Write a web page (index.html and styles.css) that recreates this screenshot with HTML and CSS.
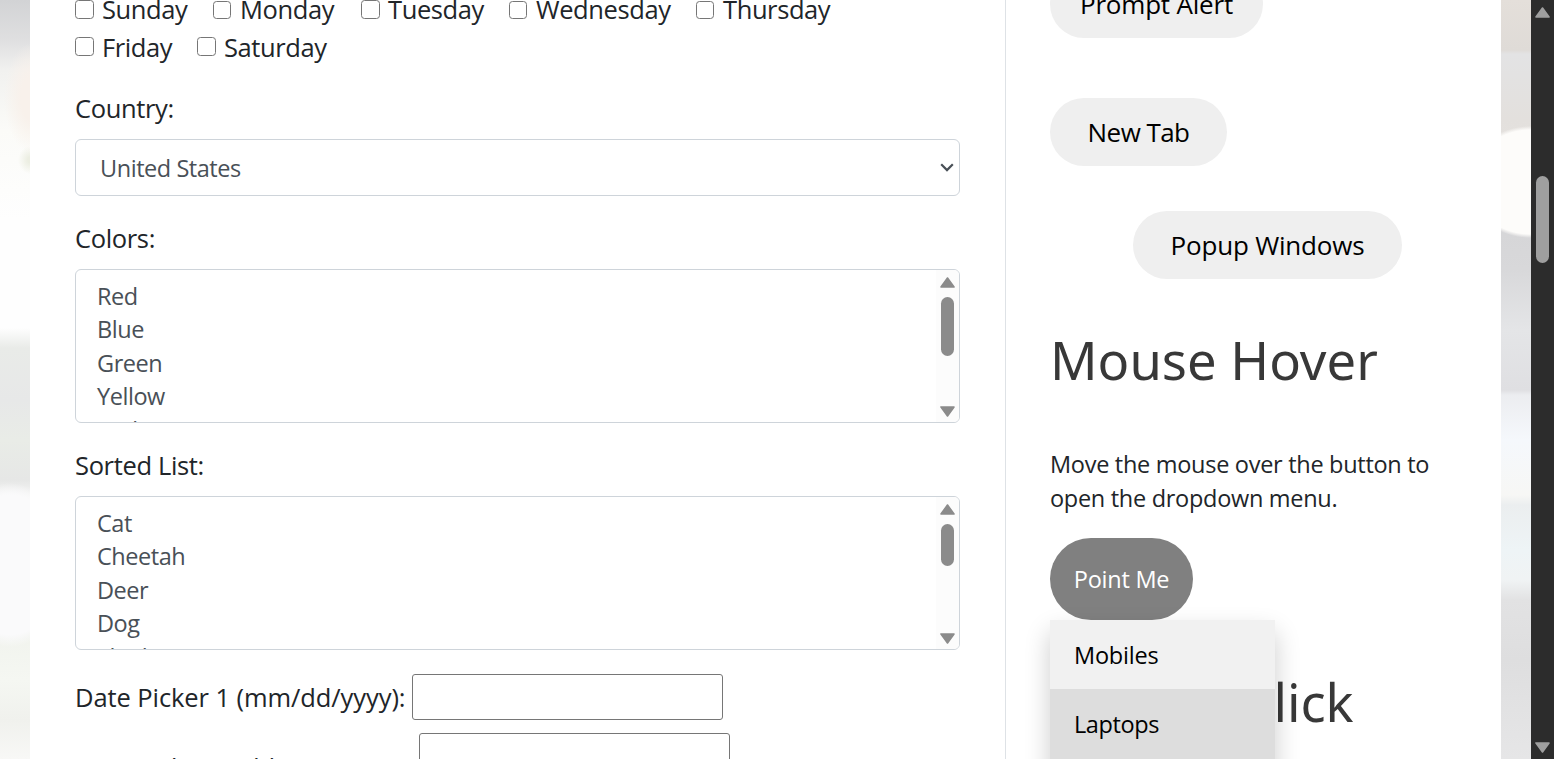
FILE: index.html
```html
<!DOCTYPE html>
<html lang="en">
<head>
<meta charset="utf-8">
<title>Automation Practice</title>
<link rel="stylesheet" href="styles.css">
</head>
<body>
<div class="page">
  <div class="strip strip-left"></div>
  <main class="content">
    <section class="form-col">
      <div class="days">
        <label class="day sun"><i class="box"></i><span>Sunday</span></label>
        <label class="day mon"><i class="box small"></i><span>Monday</span></label>
        <label class="day tue"><i class="box"></i><span>Tuesday</span></label>
        <label class="day wed"><i class="box small"></i><span>Wednesday</span></label>
        <label class="day thu"><i class="box small"></i><span>Thursday</span></label>
        <label class="day fri"><i class="box"></i><span>Friday</span></label>
        <label class="day sat"><i class="box"></i><span>Saturday</span></label>
      </div>
      <div class="label">Country:</div>
      <div class="select"><span>United States</span>
        <svg width="14" height="9" viewBox="0 0 14 9"><path d="M1.2 1.3 7 7.1 12.8 1.3" fill="none" stroke="#495057" stroke-width="2.2"/></svg>
      </div>
      <div class="label">Colors:</div>
      <div class="list">
        <ul><li>Red</li><li>Blue</li><li>Green</li><li>Yellow</li><li>Red</li></ul>
        <div class="track">
          <svg width="15" height="11" viewBox="0 0 15 11"><path class="arrow" d="M7.5 1 14 10H1Z"/></svg>
          <div class="thumb thumb-colors"></div>
          <svg class="down" width="15" height="11" viewBox="0 0 15 11"><path class="arrow" d="M7.5 10 1 1H14Z"/></svg>
        </div>
      </div>
      <div class="label">Sorted List:</div>
      <div class="list">
        <ul><li>Cat</li><li>Cheetah</li><li>Deer</li><li>Dog</li><li>Elephant</li></ul>
        <div class="track">
          <svg width="15" height="11" viewBox="0 0 15 11"><path class="arrow" d="M7.5 1 14 10H1Z"/></svg>
          <div class="thumb thumb-sorted"></div>
          <svg class="down" width="15" height="11" viewBox="0 0 15 11"><path class="arrow" d="M7.5 10 1 1H14Z"/></svg>
        </div>
      </div>
      <div class="date date-one"><span class="date-label">Date Picker 1 (mm/dd/yyyy):</span><input class="date-input"></div>
      <div class="date date-two"><span class="date-label">Date Picker 2 (dd/mm/yyyy) :</span><input class="date-input"></div>
    </section>
    <aside class="side-col">
      <button class="pill prompt">Prompt Alert</button>
      <button class="pill newtab">New Tab</button>
      <button class="pill popup">Popup Windows</button>
      <h2 class="title hover-title">Mouse Hover</h2>
      <p class="hint">Move the mouse over the button to<br>open the dropdown menu.</p>
      <div class="dropdown">
        <button class="point">Point Me</button>
        <div class="menu"><a>Mobiles</a><a class="active">Laptops</a></div>
      </div>
      <h2 class="title click-title">Double Click</h2>
    </aside>
  </main>
  <div class="strip strip-right"></div>
  <div class="scrollbar">
    <svg width="15" height="11" viewBox="0 0 15 11"><path class="arrow-light" d="M7.5 1 14 10H1Z"/></svg>
    <div class="page-thumb"></div>
    <svg class="page-down" width="15" height="11" viewBox="0 0 15 11"><path class="arrow-light" d="M7.5 10 1 1H14Z"/></svg>
  </div>
</div>
</body>
</html>
```
FILE: styles.css
```css
* { box-sizing: border-box; }
body { margin: 0; overflow: hidden; font-family: "Open Sans", "Noto Sans", sans-serif; color: #212529; }
.page { display: flex; width: 1554px; height: 759px; overflow: hidden; }
.strip { width: 30px; flex: none; }
.strip-left {
  background:
    radial-gradient(ellipse 28px 55px at 32px 98px, #f8f1eb 40%, transparent),
    radial-gradient(ellipse 12px 14px at 30px 160px, #eceee2 20%, transparent),
    radial-gradient(ellipse 60px 82px at 10px 565px, #fafafb 85%, transparent),
    linear-gradient(#d2d3d5 0, #dfdfe0 40px, #f1f1ef 70px, #fbfbf8 130px, #fefefe 220px, #fefefe 328px, #e9ebe8 348px, #e7e8e8 400px, #e9ece7 440px, #e6e7e6 480px, #f9f9f9 500px, #f9f9fb 580px, #eef0ea 595px, #f5f7f2 680px, #f0f1ed 720px, #f8f8f6 759px);
}
.strip-right {
  background:
    radial-gradient(ellipse 65px 56px at 30px 182px, #fdfcfa 93%, transparent),
    linear-gradient(#e4dfda 0, #dfdbd7 50px, #e3e3e4 54px, #e3e0dd 120px, #e5e2df 160px, #d6d6d8 235px, #d8d8da 270px, #e4e5e7 330px, #dfdfe2 390px, #ecedf0 395px, #f5f8fc 440px, #f7f7f5 495px, #ebeeef 505px, #eef4f6 550px, #f0f3f4 580px, #e2e2e3 600px, #dededf 660px, #e6e6e7 759px);
}
.content { display: flex; width: 1471px; height: 759px; flex: none; background: #fff; }
.form-col { width: 976px; height: 759px; padding: 0 45px; border-right: 1px solid #dee2e6; overflow: hidden; font-size: 25.5px; }
.side-col { width: 495px; height: 759px; padding-left: 44px; overflow: hidden; display: flex; flex-direction: column; align-items: flex-start; }

.days { display: flex; flex-wrap: wrap; margin-top: -9px; height: 76px; }
.day { display: flex; height: 38px; line-height: 37px; white-space: nowrap; letter-spacing: -.4px; }
.box { flex: none; width: 19px; height: 19px; margin: 9px 8px 0 0; border: 1px solid #767676; border-radius: 3.5px; background: #fff; }
.box.small { width: 18px; height: 18px; margin: 10px 9px 0 0; }
.fri .box, .sat .box { margin-top: 8px; }
.sun { width: 138px; }
.mon, .tue { width: 148px; }
.wed { width: 187px; }
.thu { width: 240px; }
.fri { width: 122px; }

.label { height: 38px; line-height: 36px; margin-top: 23px; margin-bottom: 11px; letter-spacing: -.35px; }
.select { display: flex; align-items: center; justify-content: space-between; height: 57px; padding: 0 5px 0 24px; margin-bottom: 24px; border: 1px solid #ced4da; border-radius: 6px; font-size: 23.5px; letter-spacing: -.45px; color: #495057; }
.list { display: flex; justify-content: space-between; height: 154px; margin-bottom: 24px; border: 1px solid #ced4da; border-radius: 6px; overflow: hidden; font-size: 23.5px; letter-spacing: -.45px; color: #495057; }
.list ul { margin: 0; padding: 9px 0 0 21px; list-style: none; }
.list li { height: 33.4px; line-height: 34px; }
.track { width: 23px; height: 152px; background: #fcfcfc; display: flex; flex-direction: column; align-items: center; padding-top: 7px; }
.track svg, .scrollbar svg { flex: none; }
.thumb { width: 13px; margin-top: 9px; border-radius: 7px; background: #8b8b8b; }
.thumb-colors { height: 59px; }
.thumb-sorted { height: 42px; }
.down { margin-top: auto; margin-bottom: 5px; }
.arrow { fill: #8b8b8b; stroke: #8b8b8b; stroke-width: 1.6; stroke-linejoin: round; }
.arrow-light { fill: #9f9f9f; stroke: #9f9f9f; stroke-width: 1.6; stroke-linejoin: round; }

.date { display: flex; white-space: nowrap; letter-spacing: -.08px; }
.date-label { width: 337px; line-height: 46px; }
.date-input { width: 311px; height: 46px; padding: 0; border: 1px solid #767676; border-radius: 3px; background: #fff; }
.date-one { height: 59px; }
.date-two .date-label { width: 344px; padding-top: 11px; }

.pill { flex: none; height: 68px; padding: 0; border: 0; border-radius: 34px; background: #efefef; color: #000; font: 26px "Open Sans", sans-serif; letter-spacing: -.2px; white-space: nowrap; }
.prompt { width: 213px; margin-top: -30px; }
.newtab { width: 177px; margin-top: 60px; letter-spacing: -.57px; }
.popup { width: 269px; margin: 45px 0 0 83px; }
.title { margin: 0; flex: none; color: #383838; font: 400 52.5px/72px "Noto Sans", sans-serif; white-space: nowrap; }
.hover-title { margin-top: 45px; }
.hint { margin: 51px 0 0; font-size: 23.5px; letter-spacing: -.29px; line-height: 34px; height: 68px; white-space: nowrap; }
.dropdown { position: relative; flex: none; margin-top: 23px; height: 82px; }
.point { width: 143px; height: 82px; padding: 0; border: 0; border-radius: 41px; background: #808080; color: #fff; font: 23.5px "Open Sans", sans-serif; letter-spacing: -.25px; }
.menu { position: absolute; top: 82px; left: 0; width: 225px; height: 207px; background: #f1f1f1; box-shadow: 0 12px 24px rgba(0,0,0,.2); z-index: 1; }
.menu a { display: block; height: 69px; padding: 0 24px; line-height: 70px; font-size: 23.5px; letter-spacing: -.2px; color: #000; }
.menu .active { height: 70px; background: #ddd; letter-spacing: -.4px; }
.click-title { margin-top: 46px; letter-spacing: -.15px; }

.scrollbar { width: 23px; flex: none; height: 759px; padding: 7px 0 6px; background: #2c2c2c; display: flex; flex-direction: column; align-items: center; }
.page-thumb { width: 13px; height: 87px; margin-top: 158px; border-radius: 7px; background: #9f9f9f; }
.page-down { margin-top: auto; }
```
